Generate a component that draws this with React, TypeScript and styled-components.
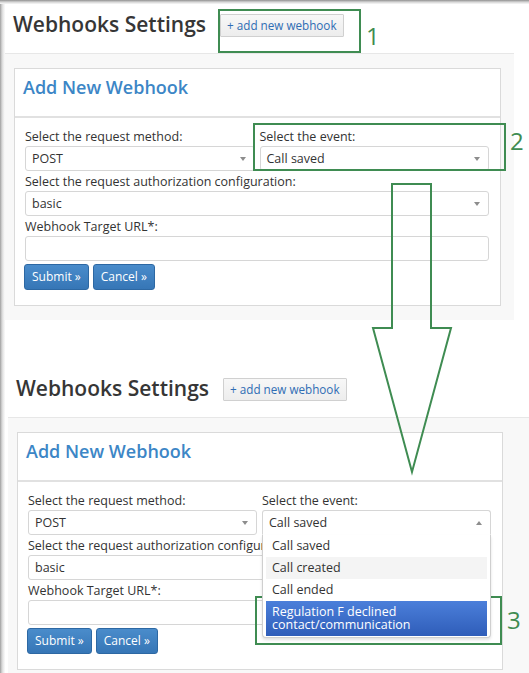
import React from "react";
import styled, { createGlobalStyle } from "styled-components";

const GREEN = "#3f8c52";

const Global = createGlobalStyle`
  html, body { margin: 0; padding: 0; background: #fff; }
  body { font-family: "Open Sans", "Liberation Sans", sans-serif; color: #333; }
  * { box-sizing: border-box; }
`;

const Page = styled.div`
  position: relative;
  width: 529px;
  height: 673px;
  overflow: hidden;
  padding-top: 4px;
  background:
    linear-gradient(to bottom, #8f8f8f 0, #b4b4b4 1px, #d2d2d2 2px, #e8e8e8 3px, #f6f6f6 4px) top left / 100% 4px no-repeat,
    linear-gradient(to right, #9c9c9c 0, #bdbdbd 1px, #d6d6d6 2px, #e6e6e6 3px, #f1f1f1 4px, #fafafa 5px) top left / 5px 100% no-repeat,
    #fff;
`;

const Shot = styled.section<{ $indent: number; $width: number; $top?: number }>`
  margin-left: ${(p) => p.$indent}px;
  margin-top: ${(p) => p.$top ?? 0}px;
  width: ${(p) => p.$width}px;
`;

const Header = styled.header`
  display: flex;
  align-items: flex-start;
  gap: 14px;
  height: 49px;
  padding: 6px 0 0 8px;
`;

const Title = styled.h1`
  margin: 0;
  font-size: 21px;
  line-height: 28px;
  font-weight: 600;
  color: #363636;
`;

const AddButton = styled.button`
  margin-top: 4px;
  height: 23px;
  padding: 0 6px;
  border: 1px solid #d0d0d0;
  border-radius: 1px;
  background: linear-gradient(#f7f7f7, #ededed);
  color: #2f6db4;
  font-family: "Open Sans", sans-serif;
  font-size: 11.7px;
  line-height: 21px;
`;

const Panel = styled.div<{ $pad: number }>`
  background: #f8f8f8;
  border-top: 1px solid #e7e7e7;
  padding: 14px ${(p) => p.$pad}px 14px 9px;
`;

const Card = styled.div`
  background: #fff;
  border: 1px solid #dadada;
`;

const CardHeader = styled.div`
  height: 49px;
  padding: 6px 8px 0;
  border-bottom: 2px solid #e1e1e1;
`;

const CardTitle = styled.h2`
  margin: 0;
  font-size: 18px;
  line-height: 25px;
  font-weight: 600;
  color: #3c86c6;
`;

const FormBody = styled.div`
  display: grid;
  gap: 2px;
  padding: 10px 11px 15px 10px;
`;

const Row = styled.div`
  display: grid;
  grid-template-columns: minmax(0, 1fr) minmax(0, 1fr);
  gap: 5px;
`;

const Field = styled.div`
  position: relative;
  min-width: 0;
`;

const Label = styled.label`
  display: block;
  font-size: 12.5px;
  line-height: 18px;
  color: #333;
  white-space: nowrap;
`;

const SelectBox = styled.div<{ $open?: boolean }>`
  position: relative;
  display: flex;
  align-items: center;
  justify-content: space-between;
  height: 25px;
  padding: 0 8px 0 6px;
  border: 1px solid #d6d6d6;
  border-radius: ${(p) => (p.$open ? "3px 3px 0 0" : "3px")};
  border-bottom-color: ${(p) => (p.$open ? "transparent" : "#d6d6d6")};
  background: #fff;
  font-size: 12.5px;
  color: #333;
  z-index: ${(p) => (p.$open ? 2 : "auto")};
`;

const Caret = styled.span<{ $up?: boolean }>`
  width: 0;
  height: 0;
  border-left: 3.5px solid transparent;
  border-right: 3.5px solid transparent;
  ${(p) => (p.$up ? "border-bottom: 4px solid #8d8d8d;" : "border-top: 4px solid #8d8d8d;")}
`;

const TextInput = styled.div`
  height: 25px;
  border: 1px solid #d6d6d6;
  border-radius: 3px;
  background: #fff;
`;

const Buttons = styled.div`
  display: flex;
  gap: 4px;
  margin-left: -1px;
  margin-top: 1px;
`;

const PrimaryButton = styled.button`
  height: 26px;
  padding: 0 7px;
  border: 1px solid #2d68a3;
  border-radius: 3px;
  background: linear-gradient(#4a8ccb, #3676b6);
  color: #fff;
  font-family: "Open Sans", sans-serif;
  font-size: 12px;
  line-height: 22px;
`;

const OptionList = styled.ul`
  position: absolute;
  left: 0;
  right: 0;
  top: 100%;
  margin: 0;
  padding: 0 3px 1px;
  list-style: none;
  background: #fff;
  border: 1px solid #cfcfcf;
  border-top: none;
  border-radius: 0 0 4px 4px;
  box-shadow: 0 2px 3px rgba(0, 0, 0, 0.12);
  z-index: 3;
`;

const Option = styled.li<{ $state?: "hover" | "selected" }>`
  padding: ${(p) => (p.$state === "selected" ? "4px 6px 5px" : "2px 6px")};
  font-size: 12.5px;
  line-height: ${(p) => (p.$state === "selected" ? "13px" : "18px")};
  color: ${(p) => (p.$state === "selected" ? "#fff" : "#333")};
  background: ${(p) =>
    p.$state === "selected"
      ? "linear-gradient(#4b7fda, #2f5db9)"
      : p.$state === "hover"
      ? "#f4f4f4"
      : "transparent"};
`;

const AnnotBox = styled.div`
  position: absolute;
  border: 2px solid ${GREEN};
  pointer-events: none;
`;

const AnnotNum = styled.span`
  position: absolute;
  font-family: "Open Sans", sans-serif;
  font-size: 24px;
  line-height: 1;
  color: ${GREEN};
`;

const ArrowSvg = styled.svg`
  position: absolute;
  left: 370px;
  top: 182px;
  overflow: visible;
`;

type ShotProps = {
  indent: number;
  width: number;
  top?: number;
  pad: number;
  open?: boolean;
};

const events = ["Call saved", "Call created", "Call ended"];

function Select({ value, open, children }: { value: string; open?: boolean; children?: React.ReactNode }) {
  return (
    <>
      <SelectBox $open={open}>
        <span>{value}</span>
        <Caret $up={open} />
      </SelectBox>
      {open && children}
    </>
  );
}

function WebhookShot({ indent, width, top, pad, open }: ShotProps) {
  return (
    <Shot $indent={indent} $width={width} $top={top}>
      <Header>
        <Title>Webhooks Settings</Title>
        <AddButton>+ add new webhook</AddButton>
      </Header>
      <Panel $pad={pad}>
        <Card>
          <CardHeader>
            <CardTitle>Add New Webhook</CardTitle>
          </CardHeader>
          <FormBody>
            <Row>
              <Field>
                <Label>Select the request method:</Label>
                <Select value="POST" />
              </Field>
              <Field>
                <Label>Select the event:</Label>
                <Field>
                  <Select value="Call saved" open={open}>
                    <OptionList>
                      {events.map((e) => (
                        <Option key={e} $state={e === "Call created" ? "hover" : undefined}>
                          {e}
                        </Option>
                      ))}
                      <Option $state="selected">
                        Regulation F declined
                        <br />
                        contact/communication
                      </Option>
                    </OptionList>
                  </Select>
                </Field>
              </Field>
            </Row>
            <Field>
              <Label>Select the request authorization configuration:</Label>
              <Select value="basic" />
            </Field>
            <Field>
              <Label>Webhook Target URL*:</Label>
              <TextInput />
            </Field>
            <Buttons>
              <PrimaryButton>Submit »</PrimaryButton>
              <PrimaryButton>Cancel »</PrimaryButton>
            </Buttons>
          </FormBody>
        </Card>
      </Panel>
    </Shot>
  );
}

export default function App() {
  return (
    <Page>
      <Global />
      <WebhookShot indent={5} width={509} pad={13} />
      <WebhookShot indent={8} width={521} top={48} pad={26} open />

      <AnnotBox style={{ left: 218, top: 9, width: 143, height: 44 }} />
      <AnnotNum style={{ left: 366, top: 24 }}>1</AnnotNum>
      <AnnotBox style={{ left: 253, top: 123, width: 253, height: 48 }} />
      <AnnotNum style={{ left: 510, top: 129 }}>2</AnnotNum>
      <AnnotBox style={{ left: 255, top: 596, width: 247, height: 49 }} />
      <AnnotNum style={{ left: 507, top: 608 }}>3</AnnotNum>

      <ArrowSvg width="84" height="292" viewBox="0 0 84 292">
        <path
          d="M22 2 H61 V146 H81 L42 290 L3 146 H22 Z"
          fill="none"
          stroke={GREEN}
          strokeWidth="2"
          strokeLinejoin="miter"
        />
      </ArrowSvg>
    </Page>
  );
}
